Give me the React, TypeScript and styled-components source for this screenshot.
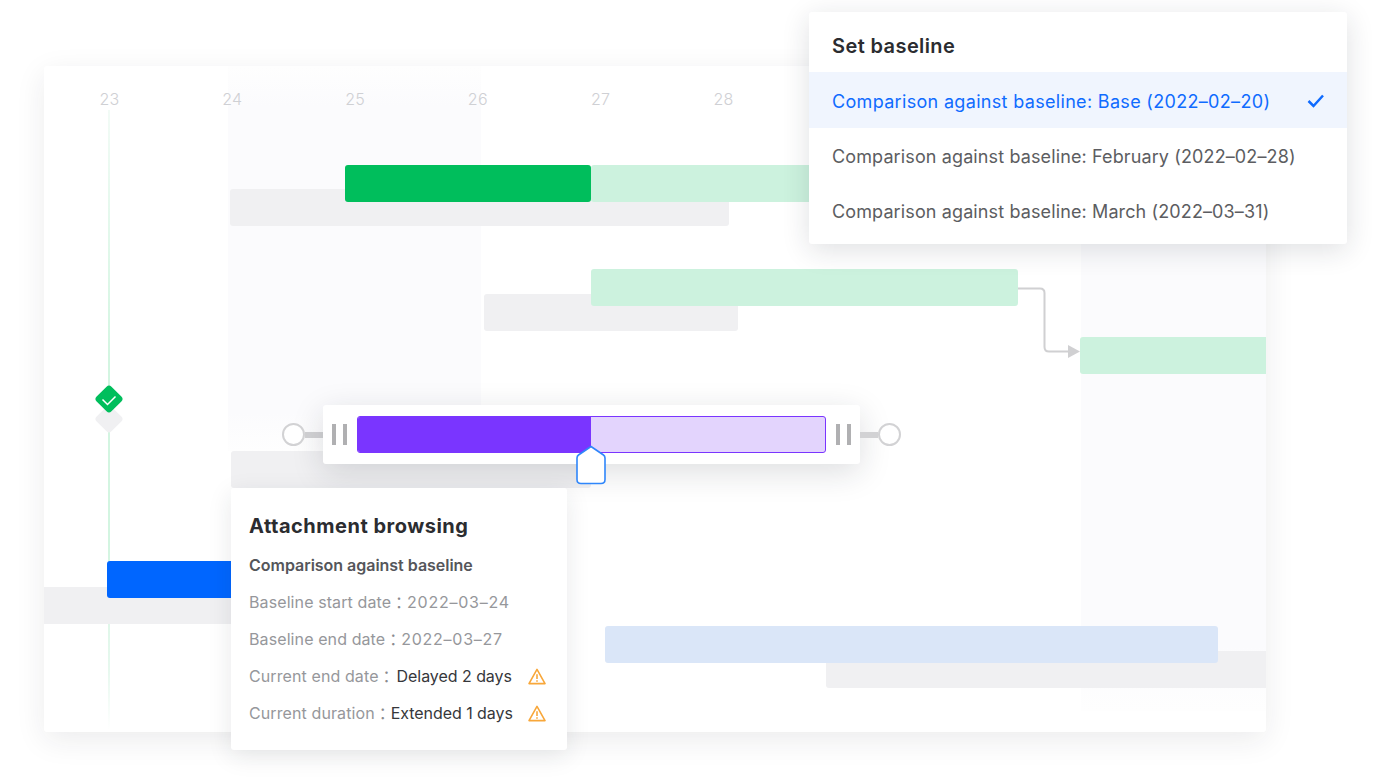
import React from "react";
import styled, { createGlobalStyle } from "styled-components";

const Global = createGlobalStyle`
  html, body { margin: 0; padding: 0; background: #fff; }
  body { font-family: "Inter", "Noto Sans", "Liberation Sans", sans-serif; overflow: hidden; }
`;

const Page = styled.div`
  position: relative;
  box-sizing: border-box;
  width: 1380px;
  height: 778px;
  padding: 66px 114px 46px 44px;
  background: #fff;
  overflow: hidden;
`;

const Chart = styled.div`
  position: relative;
  height: 100%;
  background: #fff;
  border-radius: 3px;
  box-shadow: 0 8px 30px rgba(30, 35, 50, 0.085);
  overflow: hidden;
`;

const Shade = styled.div<{ $x: number; $w: number; $h: number }>`
  position: absolute;
  left: ${(p) => p.$x}px;
  top: 0;
  width: ${(p) => p.$w}px;
  height: ${(p) => p.$h}px;
  background: linear-gradient(#fefefe 0, #fbfbfd 40px, #fbfbfd 90%, #fefefe 100%);
`;

const DayRow = styled.div`
  position: relative;
  display: flex;
  padding: 22px 0 0 1px;
`;

const Day = styled.div`
  flex: 0 0 122.8px;
  text-align: center;
  font-size: 16px;
  line-height: 22px;
  font-weight: 300;
  color: #cfd0d4;
  letter-spacing: 0.2px;
  transform: translateX(3px);
`;

const TodayLine = styled.div`
  position: absolute;
  left: 64px;
  top: 44px;
  width: 2px;
  height: 620px;
  background: linear-gradient(#f2fbf6 0%, #d3f5e1 40%, #d3f5e1 70%, #e6f8ee 90%, #ffffff 100%);
`;

const Bar = styled.div<{ $x: number; $y: number; $w: number; $c: string }>`
  position: absolute;
  left: ${(p) => p.$x - 44}px;
  top: ${(p) => p.$y - 66}px;
  width: ${(p) => p.$w}px;
  height: 37px;
  background: ${(p) => p.$c};
  border-radius: 3px;
`;

const Overlay = styled.svg`
  position: absolute;
  left: 0;
  top: 0;
  overflow: visible;
  pointer-events: none;
`;

const Dragger = styled.div`
  position: absolute;
  left: 282px;
  top: 405px;
  height: 59px;
  display: flex;
  align-items: center;
`;

const DragPanel = styled.div`
  display: flex;
  align-items: center;
  justify-content: space-between;
  width: 537px;
  height: 59px;
  box-sizing: border-box;
  padding: 0 9px;
  background: #fff;
  border-radius: 3px;
  box-shadow: 0 8px 32px rgba(30, 35, 50, 0.15);
`;

const Track = styled.div`
  display: flex;
  width: 469px;
  height: 37px;
  box-sizing: border-box;
  border-radius: 3px;
  border: 1px solid #7a35ff;
  background: #e3d4fd;
  overflow: hidden;
`;

const TrackFill = styled.div`
  flex: 0 0 233px;
  margin: -1px 0;
  background: #7a35ff;
`;

const Grip = styled.div`
  width: 15px;
  height: 21px;
  box-sizing: border-box;
  border-left: 4px solid #b0b0b2;
  border-right: 4px solid #b0b0b2;
`;

const Stem = styled.div`
  width: 18px;
  height: 6px;
  background: #d2d2d4;
`;

const Knob = styled.div`
  width: 23px;
  height: 23px;
  box-sizing: border-box;
  border-radius: 50%;
  background: #fff;
  border: 2.5px solid #d2d2d4;
  position: relative;
  z-index: 1;
`;

const Tooltip = styled.div`
  position: absolute;
  left: 231px;
  top: 488px;
  width: 336px;
  height: 262px;
  box-sizing: border-box;
  padding: 24px 18px 0;
  background: #fff;
  border-radius: 3px;
  box-shadow: 0 6px 24px rgba(30, 35, 50, 0.1);
`;

const TipTitle = styled.div`
  font-size: 20px;
  line-height: 28px;
  font-weight: 700;
  letter-spacing: 0.5px;
  color: #2b2c30;
  white-space: nowrap;
`;

const TipSub = styled.div`
  margin-top: 14px;
  font-size: 16px;
  line-height: 22px;
  font-weight: 600;
  letter-spacing: -0.02px;
  color: #55565a;
  white-space: nowrap;
`;

const TipRow = styled.div`
  margin-top: 15px;
  display: flex;
  align-items: center;
  height: 22px;
  font-size: 16px;
  line-height: 22px;
  letter-spacing: 0.1px;
  color: #96979b;
  white-space: nowrap;
`;

const TipColon = styled.span`
  font-family: "Noto Sans CJK TC", sans-serif;
  flex: none;
  width: 16px;
  color: #8a8b8f;
`;

const TipDate = styled.span`
  letter-spacing: 0.75px;
`;

const TipValue = styled.span<{ $gap?: number }>`
  margin-left: ${(p) => p.$gap ?? 0}px;
  color: #36373b;
  letter-spacing: -0.05px;
`;

const TipIcon = styled.svg`
  margin-left: auto;
  margin-right: 3px;
  flex: none;
`;

const Menu = styled.div`
  position: absolute;
  left: 809px;
  top: 12px;
  width: 538px;
  height: 232px;
  background: #fff;
  border-radius: 3px;
  box-shadow: 0 6px 28px rgba(30, 35, 50, 0.14);
`;

const MenuTitle = styled.div`
  height: 60px;
  box-sizing: border-box;
  padding: 20px 23px 0;
  font-size: 20px;
  line-height: 28px;
  font-weight: 600;
  letter-spacing: 0.4px;
  color: #2b2c30;
`;

const MenuItem = styled.div<{ $active?: boolean }>`
  display: flex;
  align-items: center;
  justify-content: space-between;
  height: ${(p) => (p.$active ? 56 : 55)}px;
  box-sizing: border-box;
  padding: 2px 22px 0 23px;
  font-size: 18px;
  font-weight: 400;
  letter-spacing: ${(p) => (p.$active ? "0.32px" : "0.12px")};
  color: ${(p) => (p.$active ? "#0f6bff" : "#5c5d61")};
  background: ${(p) => (p.$active ? "#f0f5fe" : "#fff")};
  white-space: nowrap;
`;

const days = ["23", "24", "25", "26", "27", "28"];

const Warn = () => (
  <TipIcon width="18" height="17" viewBox="0 0 18 17" fill="none">
    <path d="M9 1.4 L17 15.6 H1 Z" stroke="#f8a73a" strokeWidth="1.6" strokeLinejoin="round" />
    <path d="M9 6.2 V11" stroke="#f8a73a" strokeWidth="1.6" />
    <path d="M9 12.2 V13.8" stroke="#f8a73a" strokeWidth="1.6" />
  </TipIcon>
);

export default function App() {
  return (
    <Page>
      <Global />
      <Chart>
        <Shade $x={184} $w={253} $h={385} />
        <Shade $x={1037} $w={185} $h={645} />
        <DayRow>
          {days.map((d) => (
            <Day key={d}>{d}</Day>
          ))}
        </DayRow>
        <TodayLine />
        <Bar $x={230} $y={189} $w={499} $c="#f0f0f2" />
        <Bar $x={345} $y={165} $w={246} $c="#00be5c" />
        <Bar $x={591} $y={165} $w={230} $c="#ccf2de" />
        <Bar $x={484} $y={294} $w={254} $c="#f0f0f2" />
        <Bar $x={591} $y={268.5} $w={427} $c="#ccf2de" />
        <Bar $x={1080} $y={336.5} $w={190} $c="#ccf2de" />
        <Bar $x={231} $y={450.5} $w={360} $c="#f0f0f2" />
        <Bar $x={40} $y={586.5} $w={200} $c="#f0f0f2" />
        <Bar $x={107} $y={561} $w={130} $c="#0066ff" />
        <Bar $x={826} $y={651} $w={445} $c="#f0f0f2" />
        <Bar $x={605} $y={626} $w={613} $c="#dae6f8" />
      </Chart>

      <Overlay width="1380" height="778" viewBox="0 0 1380 778">
        <path d="M1018 288.5 H1040 Q1044.500 288.500 1044.500 293 V347 Q1044.500 351.500 1049 351.500 H1070" stroke="#d0d0d2" strokeWidth="2" fill="none" />
        <path d="M1068 345 L1080 351.500 L1068 358 Z" fill="#d0d0d2" />
        <rect x="98.500" y="408.500" width="21" height="21" rx="3.500" transform="rotate(45 109 419)" fill="#f0f0f2" />
        <rect x="98.500" y="388.500" width="21" height="21" rx="3.500" transform="rotate(45 109 399)" fill="#00be5c" />
        <path d="M102.500 399.500 L107.500 404.500 L115.500 396.500" stroke="#fff" strokeWidth="1.500" fill="none" />
      </Overlay>

      <Dragger>
        <Knob />
        <Stem />
        <DragPanel>
          <Grip />
          <Track>
            <TrackFill />
          </Track>
          <Grip />
        </DragPanel>
        <Stem />
        <Knob />
      </Dragger>

      <Overlay width="1380" height="778" viewBox="0 0 1380 778">
        <path
          d="M591 446.500 L603.500 455 Q605 456 605 458 V479.500 Q605 483.500 601 483.500 H581 Q577 483.500 577 479.500 V458 Q577 456 578.500 455 Z"
          fill="#fff"
          stroke="#2f86fb"
          strokeWidth="1.600"
          strokeLinejoin="round"
        />
      </Overlay>

      <Tooltip>
        <TipTitle>Attachment browsing</TipTitle>
        <TipSub>Comparison against baseline</TipSub>
        <TipRow>
          Baseline start date<TipColon>：</TipColon>
          <TipDate>2022–03–24</TipDate>
        </TipRow>
        <TipRow>
          Baseline end date<TipColon>：</TipColon>
          <TipDate>2022–03–27</TipDate>
        </TipRow>
        <TipRow>
          Current end date<TipColon>：</TipColon>
          <TipValue $gap={2}>Delayed 2 days</TipValue>
          <Warn />
        </TipRow>
        <TipRow>
          Current duration<TipColon>：</TipColon>
          <TipValue>Extended 1 days</TipValue>
          <Warn />
        </TipRow>
      </Tooltip>

      <Menu>
        <MenuTitle>Set baseline</MenuTitle>
        <MenuItem $active>
          Comparison against baseline: Base (2022–02–20)
          <svg width="18" height="14" viewBox="0 0 18 14" fill="none">
            <path d="M1.500 7 L6.500 12 L16 1.500" stroke="#0f6bff" strokeWidth="2.500" />
          </svg>
        </MenuItem>
        <MenuItem>Comparison against baseline: February (2022–02–28)</MenuItem>
        <MenuItem>Comparison against baseline: March (2022–03–31)</MenuItem>
      </Menu>
    </Page>
  );
}
